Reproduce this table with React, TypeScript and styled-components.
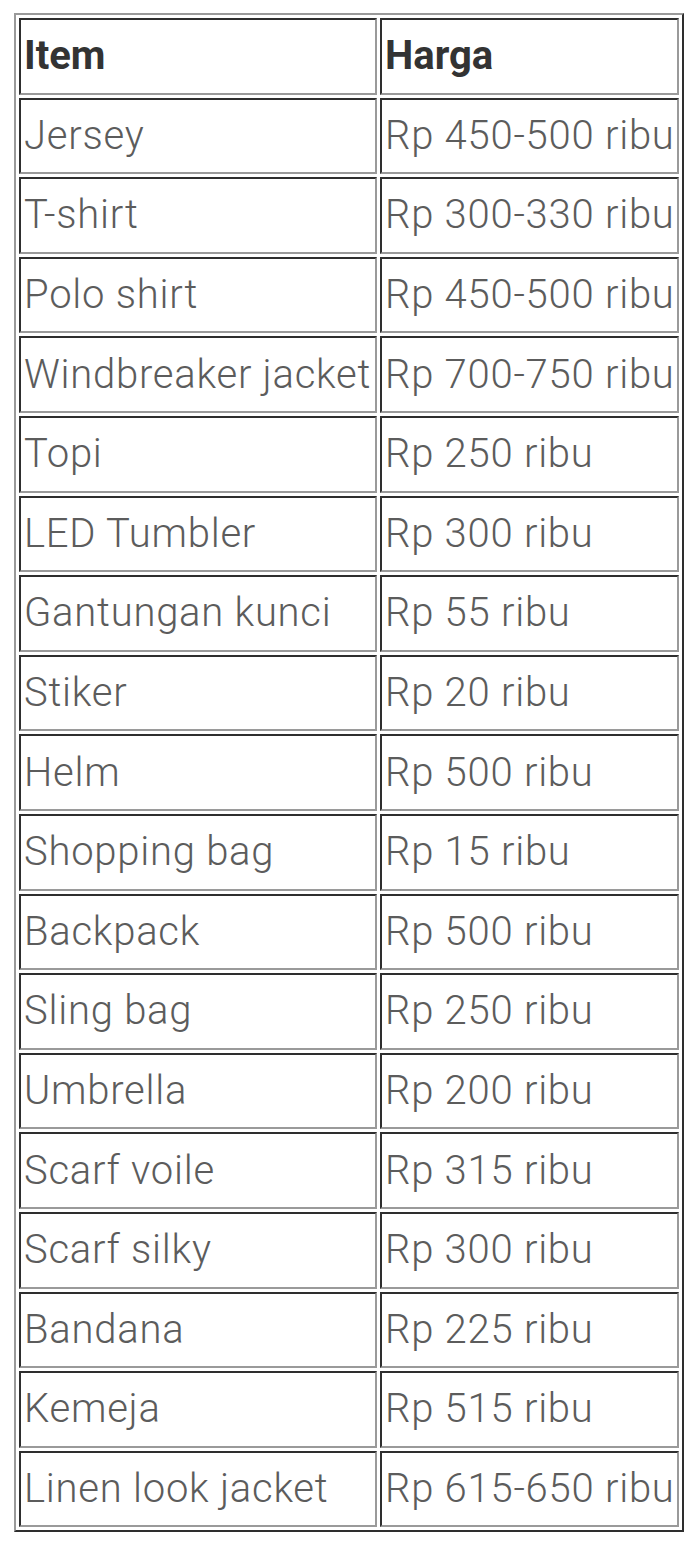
import React from "react";
import styled, { createGlobalStyle } from "styled-components";

const rows: [string, string][] = [
  ["Jersey", "Rp 450-500 ribu"],
  ["T-shirt", "Rp 300-330 ribu"],
  ["Polo shirt", "Rp 450-500 ribu"],
  ["Windbreaker jacket", "Rp 700-750 ribu"],
  ["Topi", "Rp 250 ribu"],
  ["LED Tumbler", "Rp 300 ribu"],
  ["Gantungan kunci", "Rp 55 ribu"],
  ["Stiker", "Rp 20 ribu"],
  ["Helm", "Rp 500 ribu"],
  ["Shopping bag", "Rp 15 ribu"],
  ["Backpack", "Rp 500 ribu"],
  ["Sling bag", "Rp 250 ribu"],
  ["Umbrella", "Rp 200 ribu"],
  ["Scarf voile", "Rp 315 ribu"],
  ["Scarf silky", "Rp 300 ribu"],
  ["Bandana", "Rp 225 ribu"],
  ["Kemeja", "Rp 515 ribu"],
  ["Linen look jacket", "Rp 615-650 ribu"],
];

export default function App() {
  return (
    <>
      <GlobalStyle />
      <Page>
        <PriceTable>
          <thead>
            <tr>
              <HeadCell $first>Item</HeadCell>
              <HeadCell>Harga</HeadCell>
            </tr>
          </thead>
          <tbody>
            {rows.map(([item, price]) => (
              <tr key={item}>
                <Cell $first>{item}</Cell>
                <Cell>{price}</Cell>
              </tr>
            ))}
          </tbody>
        </PriceTable>
      </Page>
    </>
  );
}

const GlobalStyle = createGlobalStyle`
  html, body {
    margin: 0;
    padding: 0;
    background: #fff;
  }
`;

const Page = styled.div`
  padding: 13px 0 0 14px;
  font-family: Roboto, "Liberation Sans", sans-serif;
`;

const PriceTable = styled.table`
  border: 2px solid;
  border-color: #9a9a9a #2e2e2e #2e2e2e #9a9a9a;
  border-collapse: separate;
  border-spacing: 3px;
  width: 670px;
  table-layout: fixed;
`;

const Cell = styled.td<{ $first?: boolean }>`
  box-sizing: border-box;
  width: ${(p) => (p.$first ? "358px" : "auto")};
  height: 76.6px;
  padding: 0 0 0 3px;
  border: 2px solid;
  border-color: #2e2e2e #9a9a9a #9a9a9a #2e2e2e;
  font-size: 40px;
  font-weight: 300;
  letter-spacing: 0.75px;
  line-height: 1;
  color: #5c5c5c;
  white-space: nowrap;
  vertical-align: middle;
  overflow: hidden;
`;

const HeadCell = styled(Cell).attrs({ as: "th" })`
  font-weight: 700;
  letter-spacing: 0;
  text-align: left;
  color: #333;
`;
